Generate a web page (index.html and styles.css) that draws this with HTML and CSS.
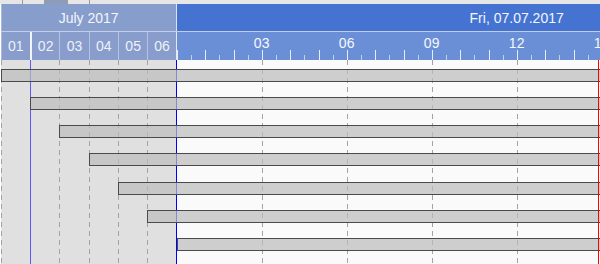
FILE: index.html
```html
<!DOCTYPE html>
<html>
<head>
<meta charset="utf-8">
<link rel="stylesheet" href="styles.css">
</head>
<body>
<div class="chart">
  <div class="topstrip">
    <span class="tab"></span><span class="tab"></span><span class="tab sel"></span><span class="tab"></span>
  </div>
  <div class="timeline">
    <div class="hdr hdr1">
      <div class="month">July 2017</div>
      <div class="dayhead">Fri, 07.07.2017</div>
    </div>
    <div class="hdr hdr2">
      <div class="days">
        <div class="d first">01</div>
        <div class="d mark">02</div>
        <div class="d">03</div>
        <div class="d">04</div>
        <div class="d">05</div>
        <div class="d">06</div>
      </div>
      <div class="hours">
        <span class="hlab">03</span>
        <span class="hlab">06</span>
        <span class="hlab">09</span>
        <span class="hlab">12</span>
        <span class="hlab">15</span>
        <span class="hlab">18</span>
        <span class="hlab">21</span>
      </div>
    </div>
    <div class="body">
      <div class="cols">
        <div class="c dc dash"></div>
        <div class="c dc blue-l"></div>
        <div class="c dc dash"></div>
        <div class="c dc dash"></div>
        <div class="c dc dash"></div>
        <div class="c dc dash blue-r"></div>
        <div class="c hc"></div>
        <div class="c hc dash"></div>
        <div class="c hc dash"></div>
        <div class="c hc dash"></div>
        <div class="c hc dash"></div>
        <div class="c hc dash"></div>
        <div class="c hc dash"></div>
        <div class="c hc dash"></div>
      </div>
      <div class="rows">
        <div class="row"><div class="bar" style="margin-left:0px"></div></div>
        <div class="row"><div class="bar" style="margin-left:29.333px"></div></div>
        <div class="row"><div class="bar" style="margin-left:58.667px"></div></div>
        <div class="row"><div class="bar" style="margin-left:88px"></div></div>
        <div class="row"><div class="bar" style="margin-left:117.333px"></div></div>
        <div class="row"><div class="bar" style="margin-left:146.667px"></div></div>
        <div class="row"><div class="bar" style="margin-left:176px"></div></div>
      </div>
      <div class="now"></div>
    </div>
  </div>
</div>
</body>
</html>
```

FILE: styles.css
```css
html, body {
  margin: 0;
  padding: 0;
  background: #ffffff;
}

.chart {
  width: 600px;
  height: 264px;
  overflow: hidden;
  font-family: "Liberation Sans", Arial, sans-serif;
  font-size: 14px;
}

.topstrip {
  height: 4px;
  display: flex;
  background: #e6e6e6;
}

.tab {
  width: 22.5px;
  border-right: 1px solid #9a9a9a;
  box-sizing: border-box;
}

.tab.sel {
  background: #8d9cb8;
}

.timeline {
  width: 856px;
  margin-left: 0.667px;
}

.hdr {
  display: flex;
}

.hdr1 {
  height: 27px;
  border-bottom: 1px solid #c3cde6;
}

.month {
  width: 176px;
  box-sizing: border-box;
  background: #879dcc;
  border-right: 1px solid #dde4f3;
  border-left: 1px solid #a9b8db;
  color: #f4f6fb;
  display: flex;
  align-items: center;
  justify-content: center;
}

.dayhead {
  width: 680px;
  background: #4573d1;
  color: #f4f7fd;
  display: flex;
  align-items: center;
  justify-content: center;
}

.hdr2 {
  height: 28px;
}

.days {
  width: 176px;
  display: flex;
  background: #889dcb;
}

.d {
  width: 29.333px;
  box-sizing: border-box;
  border-left: 1px solid #b7c4e0;
  color: #eef1f8;
  display: flex;
  align-items: center;
  justify-content: center;
  line-height: 16px;
}

.d.first {
  border-left-color: #a9b8db;
}

.d.mark {
  border-left: 2px solid #f2f5fb;
}

.d:last-child {
  border-right: 1px solid #e4e9f5;
}

.hours {
  width: 680px;
  box-sizing: border-box;
  padding-left: 42.5px;
  display: flex;
  background:
    repeating-linear-gradient(to right, rgba(255,255,255,0.85) 0 1px, transparent 1px 28.333px) 0 100% / 100% 10px no-repeat,
    repeating-linear-gradient(to right, rgba(255,255,255,0.6) 0 1px, transparent 1px 28.333px) 14.167px 100% / 100% 5px no-repeat,
    #6b8fd6;
}

.hlab {
  width: 85px;
  flex: none;
  text-align: center;
  color: #f6f8fd;
  line-height: 16px;
  padding-top: 3px;
}

.body {
  height: 204px;
  display: grid;
  position: relative;
}

.cols, .rows {
  grid-area: 1 / 1;
}

.cols {
  display: flex;
}

.c {
  box-sizing: border-box;
  height: 100%;
  flex: none;
}

.dc {
  width: 29.333px;
  background-color: #e0e0e0;
}

.hc {
  width: 85px;
  background-color: #fafafa;
}

.dash {
  background-image: repeating-linear-gradient(to bottom, #a3a3a3 0 5px, transparent 5px 9px);
  background-size: 1px 100%;
  background-repeat: no-repeat;
  background-position: 0 0;
}

.blue-l {
  border-left: 1px solid #5a5aff;
}

.blue-r {
  border-right: 1px solid #0000ff;
}

.rows {
  display: flex;
  flex-direction: column;
}

.row {
  height: 28.333px;
  flex: none;
  box-sizing: border-box;
  padding-top: 8.5px;
}

.bar {
  height: 13px;
  box-sizing: border-box;
  border: 1px solid #4a4a4a;
  border-right: none;
  background: rgba(188, 188, 188, 0.72);
}

.now {
  position: absolute;
  left: 597.333px;
  top: 0;
  width: 1px;
  height: 100%;
  background: #ff0000;
}
```
